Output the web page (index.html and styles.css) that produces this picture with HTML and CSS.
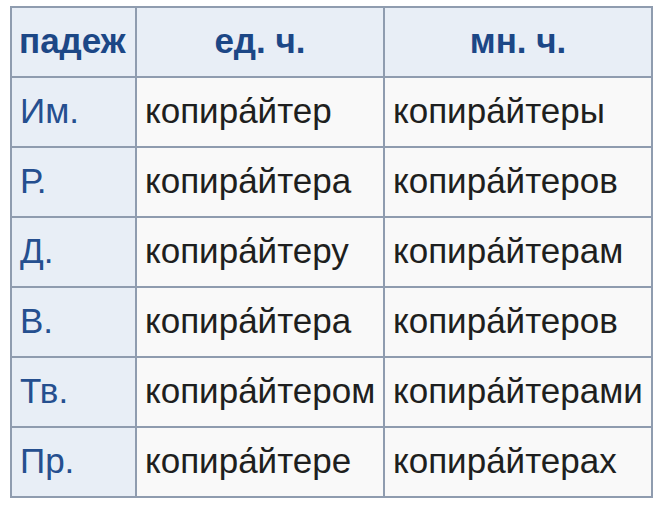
FILE: index.html
```html
<!DOCTYPE html>
<html lang="ru">
<head>
<meta charset="utf-8">
<link rel="stylesheet" href="styles.css">
</head>
<body>
<table class="infl">
  <colgroup>
    <col class="c1"><col class="c2"><col class="c3">
  </colgroup>
  <tr class="head"><th class="hcase">падеж</th><th>ед. ч.</th><th>мн. ч.</th></tr>
  <tr><th class="case">Им.</th><td>копира́йтер</td><td>копира́йтеры</td></tr>
  <tr><th class="case">Р.</th><td>копира́йтера</td><td>копира́йтеров</td></tr>
  <tr><th class="case">Д.</th><td>копира́йтеру</td><td>копира́йтерам</td></tr>
  <tr><th class="case">В.</th><td>копира́йтера</td><td>копира́йтеров</td></tr>
  <tr><th class="case">Тв.</th><td>копира́йтером</td><td>копира́йтерами</td></tr>
  <tr><th class="case">Пр.</th><td>копира́йтере</td><td>копира́йтерах</td></tr>
</table>
</body>
</html>
```
FILE: styles.css
```css
html, body {
  margin: 0;
  padding: 0;
  background: #ffffff;
}
body {
  padding: 6px 0 0 10px;
  font-family: "Liberation Sans", Arial, sans-serif;
}
.infl {
  border-collapse: collapse;
  width: 641px;
  table-layout: fixed;
  font-size: 35px;
  line-height: 40px;
}
.c1 { width: 125px; }
.c2 { width: 248px; }
.c3 { width: 268px; }
.infl th, .infl td {
  border: 2px solid #8f9caf;
  height: 66px;
  padding: 0 0 2px 8px;
  vertical-align: middle;
  text-align: left;
  white-space: nowrap;
  overflow: hidden;
}
.infl th {
  background: #e8eef6;
  color: #254f8f;
  font-weight: normal;
}
.infl td {
  background: #f9f9f9;
  color: #1e1f20;
}
.head th {
  font-weight: bold;
  color: #1c4786;
  text-align: center;
  padding-left: 0;
}
.head th.hcase {
  text-align: left;
  padding-left: 7px;
}
```
